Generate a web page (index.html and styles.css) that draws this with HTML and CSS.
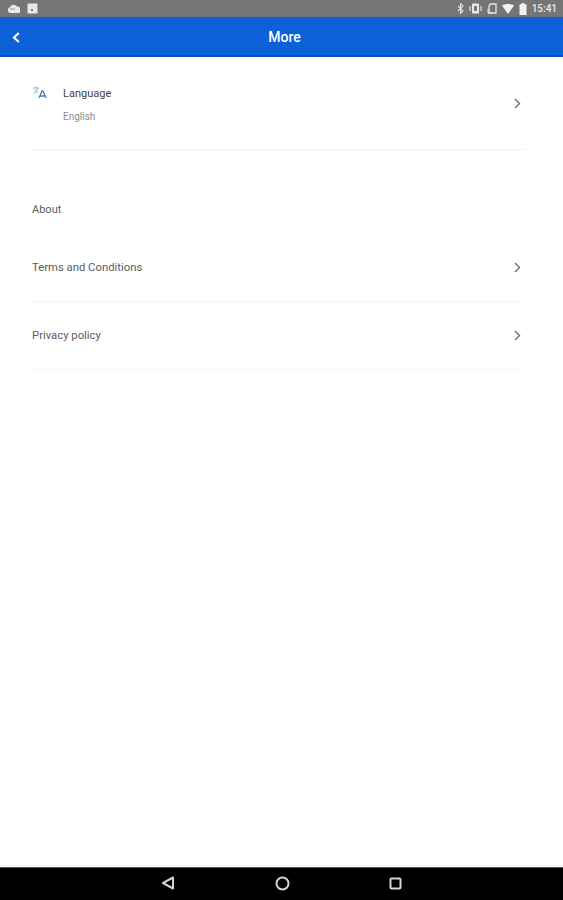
FILE: index.html
```html
<!DOCTYPE html>
<html>
<head>
  <title>More</title>
  <link rel="stylesheet" href="styles.css">
</head>
<body>
  <div class="screen">
    <div class="status-bar">
      <div class="status-left">
        <svg width="13" height="10" viewBox="0 0 13 10"><path d="M1 6a3 3 0 0 1 2-3 4 4 0 0 1 7-.5A3.500 3.500 0 0 1 12 9H3.500A2.500 2.500 0 0 1 1 6z" fill="#e8e8e8"/><path d="M3 5h5" stroke="#999" stroke-width="1"/></svg>
        <svg width="11" height="11" viewBox="0 0 11 11"><rect x="0.500" y="0.500" width="10" height="10" rx="1" fill="#e8e8e8"/><rect x="4" y="6" width="2" height="2" fill="#777"/></svg>
      </div>
      <div class="status-right">
        <svg width="7" height="11" viewBox="0 0 7 11"><path d="M1 3l5 5-2.500 2.500v-10L6 3 1 8" fill="none" stroke="#e0e0e0" stroke-width="1.100"/></svg>
        <svg width="13" height="11" viewBox="0 0 13 11"><rect x="3" y="0.500" width="7" height="10" rx="1" fill="#e8e8e8"/><rect x="5" y="3" width="3" height="5" fill="#777"/><path d="M1 3v5M12 3v5" stroke="#e0e0e0" stroke-width="1.200"/></svg>
        <svg width="10" height="11" viewBox="0 0 10 11"><path d="M3.500 1h5.500v9H2V3z" fill="none" stroke="#e8e8e8" stroke-width="1.300"/><path d="M1 6v4h4" fill="none" stroke="#e8e8e8" stroke-width="1"/></svg>
        <svg width="12" height="10" viewBox="0 0 12 10"><path d="M0 1.500C3.500-.5 8.500-.5 12 1.500L6 10z" fill="#f2f2f2"/></svg>
        <svg width="8" height="12" viewBox="0 0 8 12"><path d="M2.500 0h3v1.200H7.500V12H.5V1.200h2z" fill="#f2f2f2"/></svg>
        <span class="clock">15:41</span>
      </div>
    </div>

    <div class="app-bar">
      <svg class="back" width="8" height="11" viewBox="0 0 8 11"><path d="M6.800 1L2 5.500 6.800 10" fill="none" stroke="#fff" stroke-width="2.100"/></svg>
      <div class="app-title">More</div>
    </div>

    <div class="content">
      <div class="row row-language">
        <svg class="lang-icon" width="15" height="13" viewBox="0 0 15 13">
          <path d="M1 2h6M4 .5V2M6 2C5.500 4.500 3.500 6.500 1.200 7.500M2.500 3.500c.8 1.500 2 2.600 3.500 3.300" fill="none" stroke="#8aa4c0" stroke-width="0.900"/>
          <path d="M7 12l3-7h1l3 7M8.200 10h4.600" fill="none" stroke="#3f7fc4" stroke-width="1.300"/>
        </svg>
        <div class="lang-text">
          <div class="label">Language</div>
          <div class="sublabel">English</div>
        </div>
        <svg class="chevron" width="7" height="11" viewBox="0 0 7 11"><path d="M1 1l4.500 4.500L1 10" fill="none" stroke="#6d6d6d" stroke-width="1.400"/></svg>
      </div>

      <div class="section-title">About</div>

      <div class="row row-link">
        <div class="link-text">Terms and Conditions</div>
        <svg class="chevron" width="7" height="11" viewBox="0 0 7 11"><path d="M1 1l4.500 4.500L1 10" fill="none" stroke="#6d6d6d" stroke-width="1.400"/></svg>
      </div>
      <div class="row row-link">
        <div class="link-text">Privacy policy</div>
        <svg class="chevron" width="7" height="11" viewBox="0 0 7 11"><path d="M1 1l4.500 4.500L1 10" fill="none" stroke="#6d6d6d" stroke-width="1.400"/></svg>
      </div>
    </div>

    <div class="nav-bar">
      <svg width="14" height="14" viewBox="0 0 14 14"><path d="M12 1.500v11L2 7z" fill="none" stroke="#d4d4d4" stroke-width="2" stroke-linejoin="round"/></svg>
      <svg width="15" height="15" viewBox="0 0 15 15"><circle cx="7.500" cy="7.500" r="6" fill="none" stroke="#d4d4d4" stroke-width="2"/></svg>
      <svg width="13" height="13" viewBox="0 0 13 13"><rect x="1.500" y="1.500" width="10" height="10" rx="1" fill="none" stroke="#d4d4d4" stroke-width="2"/></svg>
    </div>
  </div>
</body>
</html>
```

FILE: styles.css
```css
* {
  margin: 0;
  padding: 0;
  box-sizing: border-box;
  font-family: Roboto, "Liberation Sans", sans-serif;
}

body {
  background: #ffffff;
}

.screen {
  width: 563px;
  height: 900px;
  display: flex;
  flex-direction: column;
  overflow: hidden;
}

.status-bar {
  height: 17px;
  flex-shrink: 0;
  background: #757575;
  display: flex;
  justify-content: space-between;
  align-items: center;
  padding: 0 6px 0 7px;
}

.status-left,
.status-right {
  display: flex;
  align-items: center;
}

.status-left {
  gap: 7px;
}

.status-right {
  gap: 5px;
}

.clock {
  color: #ececec;
  font-size: 10px;
  font-weight: 500;
}

.app-bar {
  height: 40px;
  flex-shrink: 0;
  background: #0c60d8;
  border-bottom: 2px solid #0a52c4;
  display: flex;
  align-items: center;
  justify-content: center;
  padding: 1px 0 0 6px;
  position: relative;
}

.back {
  position: absolute;
  left: 12px;
  top: 15px;
}

.app-title {
  color: #ffffff;
  font-size: 14px;
  font-weight: 500;
}

.content {
  flex: 1;
  padding: 0 38px 0 32px;
}

.row {
  display: flex;
  border-bottom: 1px solid #f0f0f0;
}

.row .chevron {
  flex-shrink: 0;
  margin-right: 4px;
}

.row-language {
  height: 93px;
  padding-top: 29px;
}

.lang-icon {
  flex-shrink: 0;
  margin-right: 16px;
}

.lang-text {
  flex: 1;
  padding-top: 1px;
}

.label {
  font-size: 11px;
  line-height: 14px;
  color: #444444;
}

.sublabel {
  font-size: 10px;
  line-height: 12px;
  margin-top: 10px;
  color: #8c8c98;
}

.row-language .chevron {
  margin-top: 12px;
}

.section-title {
  font-size: 11px;
  line-height: 14px;
  color: #5c5c5c;
  margin-top: 53px;
  margin-bottom: 17px;
}

.row-link {
  height: 68px;
  align-items: center;
  border-bottom-color: #f5f5f5;
}

.link-text {
  flex: 1;
  font-size: 11.300px;
  color: #5c5c5c;
}

.nav-bar {
  height: 33px;
  flex-shrink: 0;
  background: #000000;
  border-top: 1px solid #555;
  display: flex;
  align-items: center;
  justify-content: space-between;
  padding: 0 161px 2px;
}
```
